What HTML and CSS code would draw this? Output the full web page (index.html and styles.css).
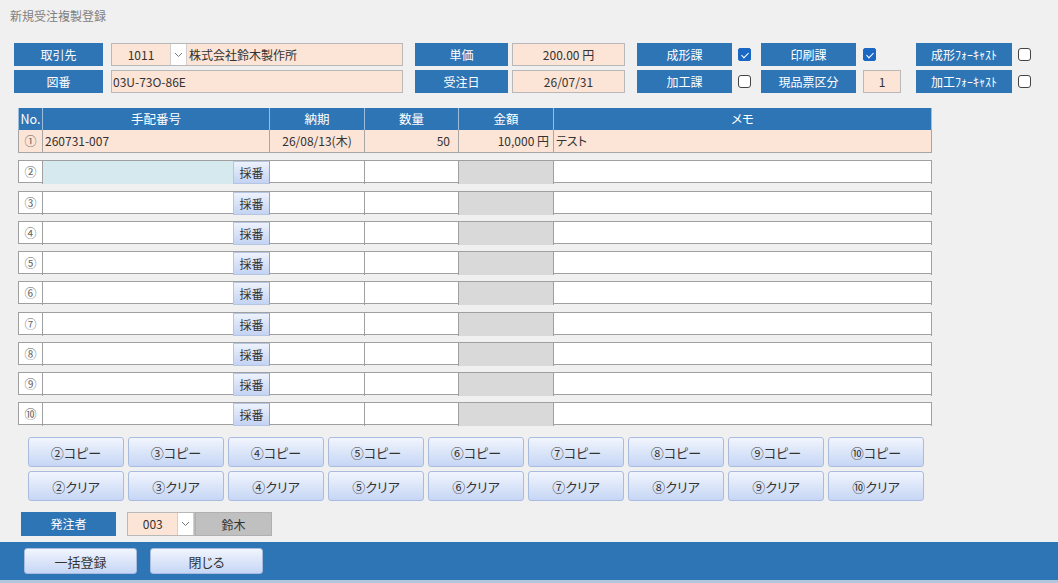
FILE: index.html
```html
<!DOCTYPE html>
<html lang="ja">
<head>
	<meta charset="utf-8">
	<title>新規受注複製登録</title>
	<link rel="stylesheet" href="styles.css">
</head>
<body>
	<div class="window">
		<div class="title">新規受注複製登録</div>

		<div class="head">
			<div class="head-row">
				<span class="lbl w89">取引先</span>
				<div class="fld combo">
					<span class="code">1011</span>
					<span class="dd"><svg width="9" height="6" viewBox="0 0 9 6"><polyline points="1,1 4.5,4.5 8,1" fill="none" stroke="#777" stroke-width="1"/></svg></span>
					<span class="name">株式会社鈴木製作所</span>
				</div>
				<span class="lbl w93 ml12">単価</span>
				<div class="fld w113 ml4 center">200.00 円</div>
				<span class="lbl w95 ml12">成形課</span>
				<span class="chk on ml6"></span>
				<span class="lbl w95 ml10">印刷課</span>
				<div class="slot"><span class="chk on"></span></div>
				<span class="lbl w96 ml15">成形ﾌｫｰｷｬｽﾄ</span>
				<span class="chk ml6"></span>
			</div>
			<div class="head-row">
				<span class="lbl w89">図番</span>
				<div class="fld w292 ml8">03U-73O-86E</div>
				<span class="lbl w93 ml12">受注日</span>
				<div class="fld w113 ml4 center">26/07/31</div>
				<span class="lbl w95 ml12">加工課</span>
				<span class="chk ml6"></span>
				<span class="lbl w95 ml10">現品票区分</span>
				<div class="slot"><div class="fld w38 center">1</div></div>
				<span class="lbl w96 ml15">加工ﾌｫｰｷｬｽﾄ</span>
				<span class="chk ml6"></span>
			</div>
		</div>

		<div class="grid">
			<div class="g-head">
				<span>No.</span>
				<span>手配番号</span>
				<span>納期</span>
				<span>数量</span>
				<span>金額</span>
				<span>メモ</span>
			</div>
			<div class="g-first">
				<span class="no">①</span>
				<span class="left">260731-007</span>
				<span class="center">26/08/13(木)</span>
				<span class="right pr8">50</span>
				<span class="right pr4">10,000 円</span>
				<span class="left">テスト</span>
			</div>
			<div class="g-rows">
				<div class="g-row"><span class="no">②</span><span class="inp focus"></span><span class="num-btn">採番</span><span></span><span></span><span class="gray"></span><span></span></div>
				<div class="g-row"><span class="no">③</span><span class="inp"></span><span class="num-btn">採番</span><span></span><span></span><span class="gray"></span><span></span></div>
				<div class="g-row"><span class="no">④</span><span class="inp"></span><span class="num-btn">採番</span><span></span><span></span><span class="gray"></span><span></span></div>
				<div class="g-row"><span class="no">⑤</span><span class="inp"></span><span class="num-btn">採番</span><span></span><span></span><span class="gray"></span><span></span></div>
				<div class="g-row"><span class="no">⑥</span><span class="inp"></span><span class="num-btn">採番</span><span></span><span></span><span class="gray"></span><span></span></div>
				<div class="g-row"><span class="no">⑦</span><span class="inp"></span><span class="num-btn">採番</span><span></span><span></span><span class="gray"></span><span></span></div>
				<div class="g-row"><span class="no">⑧</span><span class="inp"></span><span class="num-btn">採番</span><span></span><span></span><span class="gray"></span><span></span></div>
				<div class="g-row"><span class="no">⑨</span><span class="inp"></span><span class="num-btn">採番</span><span></span><span></span><span class="gray"></span><span></span></div>
				<div class="g-row"><span class="no">⑩</span><span class="inp"></span><span class="num-btn">採番</span><span></span><span></span><span class="gray"></span><span></span></div>
			</div>
		</div>

		<div class="copy-btns">
			<button class="btn">②コピー</button>
			<button class="btn">③コピー</button>
			<button class="btn">④コピー</button>
			<button class="btn">⑤コピー</button>
			<button class="btn">⑥コピー</button>
			<button class="btn">⑦コピー</button>
			<button class="btn">⑧コピー</button>
			<button class="btn">⑨コピー</button>
			<button class="btn">⑩コピー</button>
			<button class="btn">②クリア</button>
			<button class="btn">③クリア</button>
			<button class="btn">④クリア</button>
			<button class="btn">⑤クリア</button>
			<button class="btn">⑥クリア</button>
			<button class="btn">⑦クリア</button>
			<button class="btn">⑧クリア</button>
			<button class="btn">⑨クリア</button>
			<button class="btn">⑩クリア</button>
		</div>

		<div class="orderer">
			<span class="lbl w95">発注者</span>
			<div class="fld small-combo">
				<span class="code">003</span>
				<span class="dd"><svg width="9" height="6" viewBox="0 0 9 6"><polyline points="1,1 4.5,4.5 8,1" fill="none" stroke="#777" stroke-width="1"/></svg></span>
			</div>
			<span class="person">鈴木</span>
		</div>
	</div>

	<div class="footer">
		<button class="btn foot-btn">一括登録</button>
		<button class="btn foot-btn">閉じる</button>
	</div>
</body>
</html>
```

FILE: styles.css
```css
* {
	box-sizing: border-box;
}
body {
	margin: 0;
	background: #f0f0f0;
	font-family: "Noto Sans CJK JP", "Noto Sans", sans-serif;
	font-size: 12px;
	color: #333;
	font-feature-settings: "palt";
	width: 1058px;
	height: 583px;
	overflow: hidden;
}
.window {
	height: 542px;
}
.title {
	padding: 8px 0 0 10px;
	height: 24px;
	line-height: 16px;
	color: #808080;
	font-size: 12px;
	font-feature-settings: normal;
}

/* header fields */
.head {
	margin-top: 19px;
	padding-left: 14px;
	display: flex;
	flex-direction: column;
	gap: 4px;
}
.head-row {
	display: flex;
	align-items: center;
	height: 23px;
}
.lbl {
	height: 23px;
	line-height: 23px;
	background: #2e75b6;
	color: #fff;
	text-align: center;
	flex-shrink: 0;
}
.fld {
	height: 23px;
	line-height: 21px;
	background: #fce4d6;
	border: 1px solid #b8b8b8;
	padding: 0 1px;
	flex-shrink: 0;
}
.center { text-align: center; }
.left { text-align: left; padding-left: 2px; }
.right { text-align: right; }
.pr8 { padding-right: 8px; }
.pr4 { padding-right: 4px; }
.w38 { width: 38px; }
.w89 { width: 89px; }
.w93 { width: 93px; }
.w95 { width: 95px; }
.w96 { width: 96px; }
.w113 { width: 113px; }
.w292 { width: 292px; }
.ml4 { margin-left: 4px; }
.ml6 { margin-left: 6px; }
.ml8 { margin-left: 8px; }
.ml10 { margin-left: 10px; }
.ml12 { margin-left: 12px; }
.ml15 { margin-left: 15px; }

.combo {
	width: 292px;
	margin-left: 8px;
	display: flex;
	padding: 0;
}
.combo .code {
	width: 58px;
	text-align: center;
}
.dd {
	width: 17px;
	background: #fff;
	border-left: 1px solid #d0d0d0;
	border-right: 1px solid #d0d0d0;
	display: flex;
	align-items: center;
	justify-content: center;
}
.combo .name {
	padding-left: 2px;
}
.slot {
	width: 38px;
	margin-left: 7px;
	display: flex;
	align-items: center;
}
.chk {
	width: 13px;
	height: 13px;
	border: 1px solid #444;
	border-radius: 3px;
	background: #fff;
	flex-shrink: 0;
	position: relative;
}
.chk.on {
	background: #1b67c4;
	border-color: #1b67c4;
	border-radius: 2px;
}
.chk.on::after {
	content: "";
	position: absolute;
	left: 3.5px;
	top: 1.5px;
	width: 3px;
	height: 6px;
	border-right: 1px solid #fff;
	border-bottom: 1px solid #fff;
	transform: rotate(45deg);
}

/* detail grid */
.grid {
	margin: 15px 0 0 18px;
	width: 914px;
}
.g-head,
.g-first {
	display: grid;
	grid-template-columns: 25px 227px 95px 94px 95px 378px;
	height: 22px;
	line-height: 22px;
}
.g-head {
	background: #2e75b6;
	color: #fff;
	text-align: center;
	font-size: 12.5px;
}
.g-head span {
	border-right: 1px solid #9dbddf;
}
.g-head span:first-child {
	border-left: 1px solid #9dbddf;
}
.g-first {
	height: 23px;
	background: #fce4d6;
	border-left: 1px solid #a6a6a6;
	border-bottom: 1px solid #a6a6a6;
	grid-template-columns: 24px 227px 95px 94px 95px 378px;
}
.g-first span {
	border-right: 1px solid #a6a6a6;
}
.no {
	text-align: center;
	color: #666;
}
.g-rows {
	display: flex;
	flex-direction: column;
	gap: 7.25px;
	margin-top: 7.25px;
}
.g-row {
	display: grid;
	grid-template-columns: 24px 190px 37px 95px 94px 95px 378px;
	height: 23px;
	line-height: 21px;
	background: #fff;
	border: 1px solid #a0a0a0;
	border-right: none;
}
.g-row span {
	border-right: 1px solid #a0a0a0;
}
.g-row .inp {
	border-right: none;
}
.g-row .focus {
	background: #d5e9ef;
}
.g-row .gray {
	background: #d9d9d9;
}
.num-btn {
	text-align: center;
	background: linear-gradient(#edf2fc, #c3d3f3);
	border: 1px solid #b5c5e2;
	font-size: 12px;
}

/* copy / clear buttons */
.copy-btns {
	margin: 12px 0 0 28px;
	display: grid;
	grid-template-columns: repeat(9, 96px);
	column-gap: 4px;
	row-gap: 4px;
}
.btn {
	font-family: inherit;
	font-feature-settings: "palt";
	font-size: 13px;
	color: #333;
	background: linear-gradient(#f1f5fd, #c6d6f5);
	border: 1px solid #a9bcdf;
	border-radius: 3px;
	padding: 0;
	height: 30px;
	cursor: pointer;
}
.btn:hover {
	background: linear-gradient(#f7faff, #d6e2f8);
}

/* orderer */
.orderer {
	margin: 11px 0 0 21px;
	display: flex;
	height: 24px;
}
.orderer .lbl {
	height: 24px;
	line-height: 24px;
}
.small-combo {
	margin-left: 11px;
	height: 24px;
	width: 68px;
	display: flex;
	padding: 0;
	line-height: 22px;
}
.small-combo .code {
	width: 51px;
	text-align: center;
}
.person {
	width: 77px;
	height: 24px;
	line-height: 24px;
	background: #c0c0c0;
	text-align: center;
	border: 1px solid #b0b0b0;
}

/* footer */
.footer {
	height: 41px;
	background: #2e75b6;
	border-bottom: 3px solid #b3c6dc;
	padding: 6px 0 0 24px;
	display: flex;
	gap: 13px;
}
.foot-btn {
	width: 113px;
	height: 26px;
	font-size: 13px;
}
```
